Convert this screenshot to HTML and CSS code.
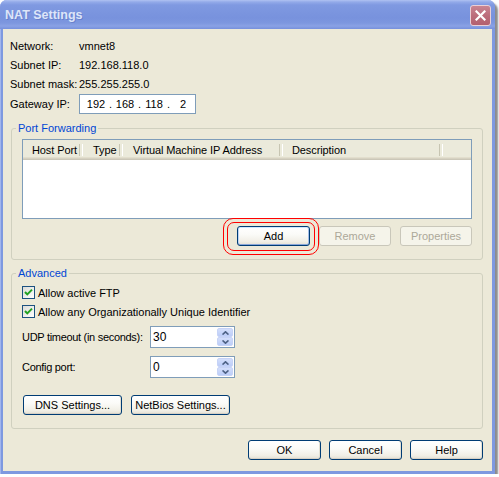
FILE: index.html
```html
<!DOCTYPE html>
<html>
<head>
<meta charset="utf-8">
<link rel="stylesheet" href="styles.css">
</head>
<body>
<div class="window">
  <div class="titlebar">
    <span class="title">NAT Settings</span>
    <span class="close"><svg width="11" height="11" viewBox="0 0 11 11"><path d="M1.5 1.5 L9.5 9.5 M9.5 1.5 L1.5 9.5" stroke="#fff" stroke-width="2.2" stroke-linecap="square"/></svg></span>
  </div>
  <div class="client">
    <div class="info">
      <span>Network:</span><span>vmnet8</span>
      <span>Subnet IP:</span><span>192.168.118.0</span>
      <span>Subnet mask:</span><span>255.255.255.0</span>
      <span>Gateway IP:</span>
      <div class="ipbox"><span class="oct">192</span><span class="dot">.</span><span class="oct">168</span><span class="dot">.</span><span class="oct">118</span><span class="dot">.</span><span class="oct">2</span></div>
    </div>

    <fieldset class="group">
      <legend>Port Forwarding</legend>
      <div class="pf">
        <div class="list">
          <div class="list-header">
            <span class="col c1">Host Port</span>
            <span class="col c2">Type</span>
            <span class="col c3">Virtual Machine IP Address</span>
            <span class="col c4">Description</span>
          </div>
        </div>
        <div class="pf-actions">
          <div class="add-wrap">
            <span class="ring ring-outer"></span>
            <span class="ring ring-inner"></span>
            <button class="btn btn-default">Add</button>
          </div>
          <button class="btn" disabled>Remove</button>
          <button class="btn" disabled>Properties</button>
        </div>
      </div>
    </fieldset>

    <fieldset class="group group-adv">
      <legend>Advanced</legend>
      <div class="adv">
        <label class="check-row"><span class="checkbox"><svg width="11" height="11" viewBox="0 0 11 11"><path d="M2 5 L4.3 7.4 L9 2.6" fill="none" stroke="#21a121" stroke-width="2"/></svg></span>Allow active FTP</label>
        <label class="check-row"><span class="checkbox"><svg width="11" height="11" viewBox="0 0 11 11"><path d="M2 5 L4.3 7.4 L9 2.6" fill="none" stroke="#21a121" stroke-width="2"/></svg></span>Allow any Organizationally Unique Identifier</label>
        <div class="spin-row first">
          <span class="spin-label">UDP timeout (in seconds):</span>
          <div class="spin">
            <span class="spin-value">30</span>
            <span class="spin-btns">
              <span class="sb"><svg width="7" height="4" viewBox="0 0 7 4"><path d="M0.5 3.6 L3.5 0.8 L6.5 3.6" fill="none" stroke="#4d6185" stroke-width="1.6"/></svg></span>
              <span class="sb"><svg width="7" height="4" viewBox="0 0 7 4"><path d="M0.5 0.4 L3.5 3.2 L6.5 0.4" fill="none" stroke="#4d6185" stroke-width="1.6"/></svg></span>
            </span>
          </div>
        </div>
        <div class="spin-row">
          <span class="spin-label">Config port:</span>
          <div class="spin">
            <span class="spin-value">0</span>
            <span class="spin-btns">
              <span class="sb"><svg width="7" height="4" viewBox="0 0 7 4"><path d="M0.5 3.6 L3.5 0.8 L6.5 3.6" fill="none" stroke="#4d6185" stroke-width="1.6"/></svg></span>
              <span class="sb"><svg width="7" height="4" viewBox="0 0 7 4"><path d="M0.5 0.4 L3.5 3.2 L6.5 0.4" fill="none" stroke="#4d6185" stroke-width="1.6"/></svg></span>
            </span>
          </div>
        </div>
        <div class="adv-actions">
          <button class="btn btn-wide">DNS Settings...</button>
          <button class="btn btn-wide">NetBios Settings...</button>
        </div>
      </div>
    </fieldset>

    <div class="dialog-actions">
      <button class="btn btn-dlg">OK</button>
      <button class="btn btn-dlg">Cancel</button>
      <button class="btn btn-dlg">Help</button>
    </div>
  </div>
</div>
</body>
</html>
```

FILE: styles.css
```css
* { box-sizing: border-box; }

body {
  margin: 0;
  background: #ffffff;
  font-family: "Liberation Sans", Arial, sans-serif;
  font-size: 11px;
  color: #000;
}

.window {
  width: 495px;
  height: 474px;
  display: flex;
  flex-direction: column;
  background: #7e99e0;
  border-radius: 7px 7px 0 0;
  box-shadow: inset 1px 0 0 #a3b6ec, 3px 3px 2px rgba(0, 0, 0, 0.45);
}

.titlebar {
  flex: none;
  height: 29px;
  display: flex;
  align-items: center;
  justify-content: space-between;
  padding: 0 4px 0 5px;
  border-radius: 7px 7px 0 0;
  background: linear-gradient(#b0c2f2 0, #93aae9 2px, #7f99e1 5px, #7892dd 18px, #7d97df 23px, #8aa2e5 26px, #7690dc 29px);
}

.title {
  color: #dde5f9;
  font-family: "Liberation Sans", Arial, sans-serif;
  font-weight: bold;
  font-size: 12.5px;
  margin-top: 1px;
  text-shadow: 1px 1px 0 rgba(70, 90, 170, 0.35);
}

.close {
  width: 21px;
  height: 21px;
  margin-top: 1px;
  display: flex;
  align-items: center;
  justify-content: center;
  border: 1px solid #ead0d6;
  border-radius: 3px;
  background: linear-gradient(#c98592, #bc6d7b 50%, #b3606f);
}

.client {
  flex: 1;
  margin: 0 3px 3px;
  background: #ece9d8;
  padding: 7px 9px 11px 7px;
  display: flex;
  flex-direction: column;
}

.info {
  display: grid;
  grid-template-columns: 69px auto;
  grid-template-rows: 19px 19px 19px 22px;
  align-items: center;
  white-space: nowrap;
}

.ipbox {
  width: 117px;
  height: 20px;
  border: 1px solid #7f9db9;
  background: #fff;
  display: flex;
  align-items: center;
  padding-left: 6px;
}

.oct { width: 20px; text-align: center; }
.dot { width: 9px; text-align: center; }

.group {
  margin: 7px 0 0 1px;
  padding: 0;
  border: 1px solid #d0d0bf;
  border-radius: 3px;
  min-width: 0;
}

.group legend {
  margin-left: 4px;
  padding: 0 2px;
  line-height: 13px;
  color: #0046d5;
}

.pf {
  padding: 4px 10px 13px 10px;
}

.list {
  height: 80px;
  border: 1px solid #7f9db9;
  background: #fff;
}

.list-header {
  display: flex;
  height: 20px;
  background: linear-gradient(#ebeadb 0, #ebeadb 17px, #e2decd 17px, #e2decd 18px, #d6d2c2 18px, #d6d2c2 19px, #cbc7b8 19px, #cbc7b8 20px);
}

.col {
  position: relative;
  padding: 1px 0 0 9px;
  line-height: 19px;
  white-space: nowrap;
  letter-spacing: -0.1px;
}

.col::after {
  content: "";
  position: absolute;
  right: 0;
  top: 4px;
  height: 12px;
  width: 2px;
  border-left: 1px solid #c7c5b2;
  border-right: 1px solid #fff;
}

.c1 { width: 60px; }
.c2 { width: 40px; padding-left: 10px; }
.c3 { width: 160px; padding-left: 10px; }
.c4 { width: 160px; }

.pf-actions {
  display: flex;
  justify-content: flex-end;
  gap: 9px;
  margin-top: 7px;
}

.add-wrap { position: relative; }

.ring {
  position: absolute;
  border: 1px solid #ff0000;
  pointer-events: none;
}

.ring-outer {
  left: -14px;
  top: -8px;
  width: 96px;
  height: 37px;
  border-radius: 10px;
}

.ring-inner {
  left: -10px;
  top: -4px;
  width: 88px;
  height: 29px;
  border-radius: 7px;
}

.btn {
  width: 72px;
  height: 20px;
  padding: 0;
  font-family: "Liberation Sans", Arial, sans-serif;
  font-size: 11px;
  color: #000;
  border: 1px solid #003c74;
  border-radius: 3px;
  background: linear-gradient(#ffffff 0%, #fbfbf8 40%, #f1efe6 80%, #e3e0d4 100%);
  box-shadow: inset 0 -1px 0 #d6d0c5, inset -1px 0 0 #e3e0d4;
}

.btn-default {
  position: relative;
  width: 73px;
  box-shadow: inset 0 1px 0 #cee7ff, inset 0 -1px 0 #89a6d8, inset 1px 0 0 #bcd4f6, inset -1px 0 0 #a3bde8;
}

.btn:disabled {
  color: #aca899;
  border-color: #c9c7ba;
  background: #f5f4ea;
  box-shadow: none;
}

.adv {
  padding: 3px 10px 13px 10px;
}

.check-row {
  display: flex;
  align-items: center;
  height: 19px;
  white-space: nowrap;
}

.checkbox {
  width: 13px;
  height: 13px;
  margin-right: 3px;
  border: 1px solid #1c5180;
  background: linear-gradient(135deg, #dcdcd7, #ffffff);
  display: flex;
  align-items: center;
  justify-content: center;
}

.spin-row {
  display: flex;
  align-items: center;
  margin-top: 8px;
}

.spin-row.first { margin-top: 5px; }

.spin-label {
  flex: none;
  width: 128px;
  white-space: nowrap;
  letter-spacing: -0.3px;
}

.spin {
  flex: none;
  width: 85px;
  height: 22px;
  border: 1px solid #7f9db9;
  background: #fff;
  display: flex;
  padding: 1px;
}

.spin-value {
  flex: 1;
  padding-left: 1px;
  line-height: 18px;
  font-size: 12px;
}

.spin-btns {
  width: 16px;
  display: flex;
  flex-direction: column;
}

.sb {
  flex: 1;
  display: flex;
  align-items: center;
  justify-content: center;
  background: linear-gradient(#d3defb, #bccdf8);
  border: 1px solid #c6d3f7;
  border-radius: 2px;
}

.adv-actions {
  display: flex;
  gap: 9px;
  margin-top: 17px;
  padding-left: 1px;
}

.btn-wide { width: 99px; }

.dialog-actions {
  display: flex;
  justify-content: flex-end;
  gap: 8px;
  margin-top: 11px;
}

.btn-dlg { width: 73px; }
```
